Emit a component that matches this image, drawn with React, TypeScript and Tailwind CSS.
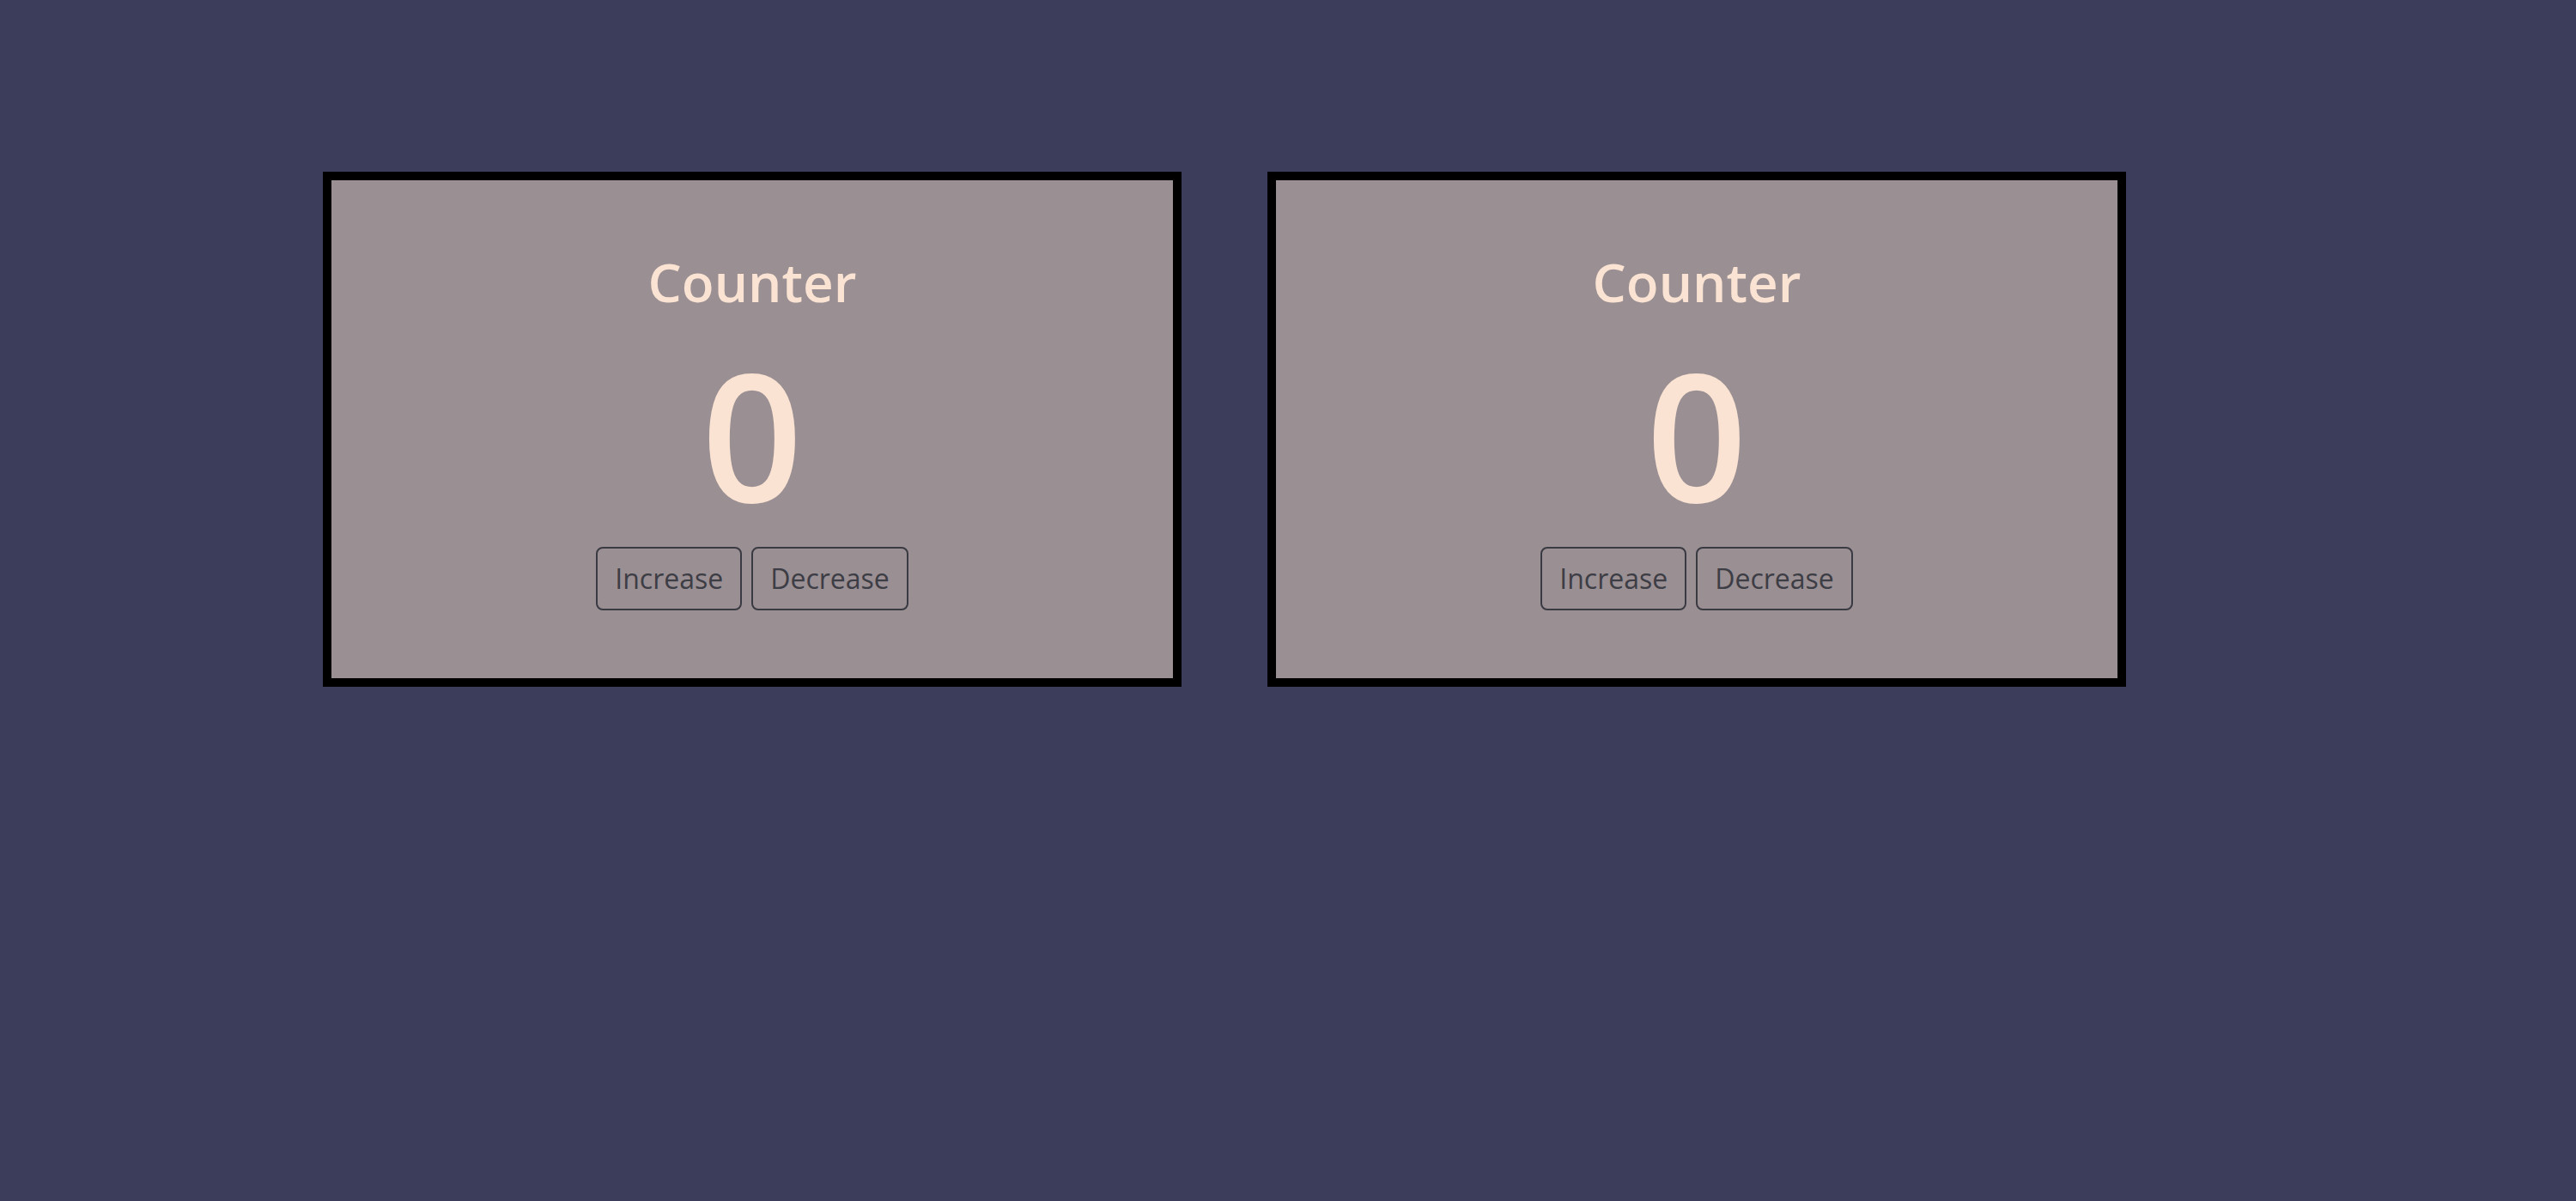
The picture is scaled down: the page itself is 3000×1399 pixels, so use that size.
import { useState } from "react";

function Counter() {
    const [count, setCount] = useState(0);

    return (
        <div className="w-[1000px] h-[600px] bg-[#9a8f93] border-[10px] border-black flex flex-col items-center pt-[87px]">
            <h1 className="text-[62px] leading-none font-semibold text-[#fae3d2]">Counter</h1>
            <div className="mt-[43px] text-[206px] leading-none font-semibold text-[#fae3d2]">{count}</div>
            <div className="mt-[29px] flex gap-[11px]">
                <button
                    onClick={() => setCount(count + 1)}
                    className="px-[20px] py-[15px] text-[32px] leading-[40px] text-[#3d3d45] border-2 border-[#3a3a42] rounded-lg"
                >
                    Increase
                </button>
                <button
                    onClick={() => setCount(count - 1)}
                    className="px-[20px] py-[15px] text-[32px] leading-[40px] text-[#3d3d45] border-2 border-[#3a3a42] rounded-lg"
                >
                    Decrease
                </button>
            </div>
        </div>
    );
}

export default function App() {
    return (
        <div className="w-full min-h-screen bg-[#3b3d5a] flex items-start gap-[100px] pl-[376px] pt-[200px] font-['Open_Sans',sans-serif]">
            <Counter />
            <Counter />
        </div>
    );
}
